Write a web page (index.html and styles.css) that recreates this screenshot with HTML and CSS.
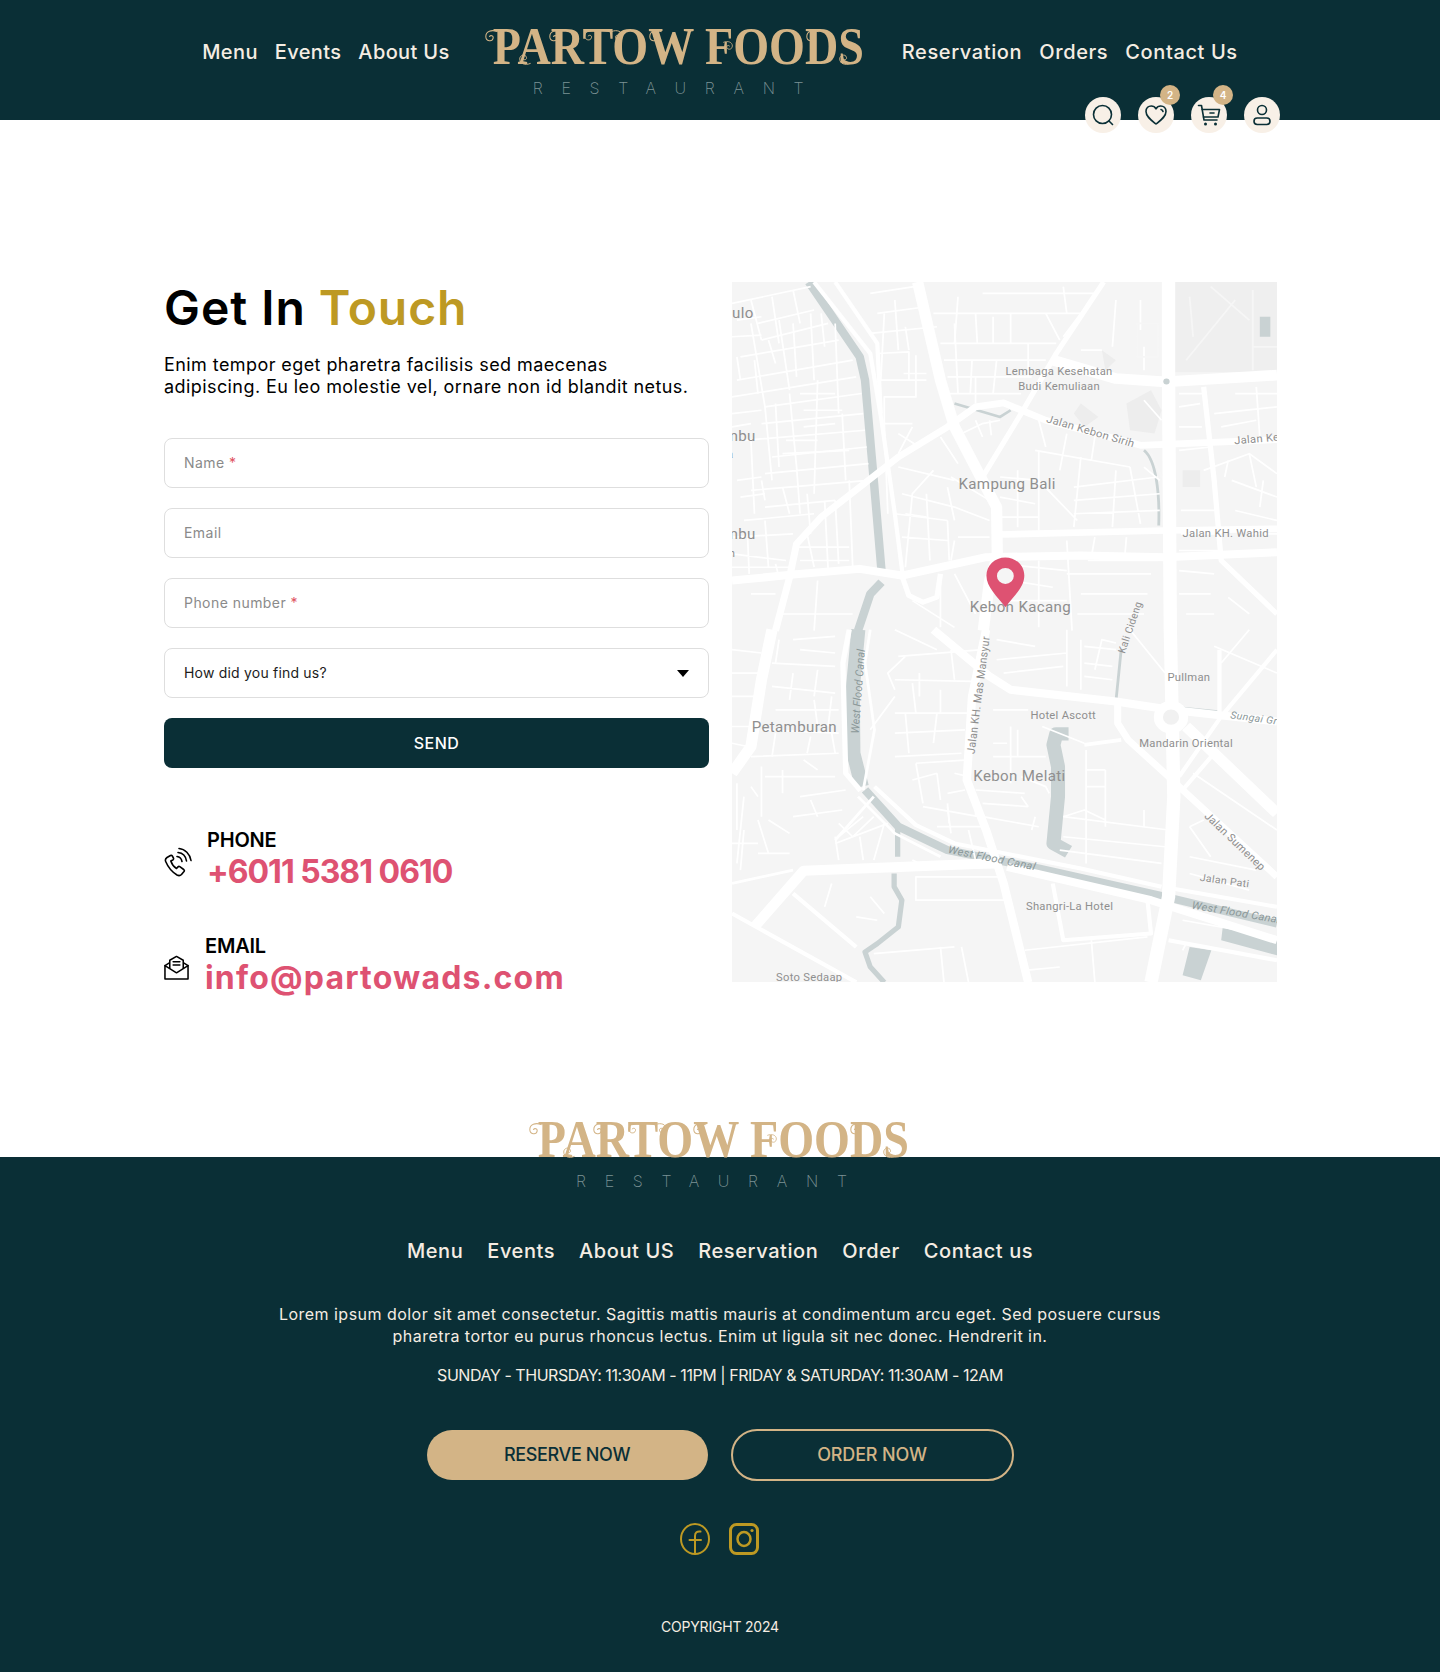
FILE: index.html
```html
<!DOCTYPE html>
<html lang="en">
<head>
<meta charset="utf-8">
<title>Partow Foods Restaurant - Contact</title>
<link rel="stylesheet" href="styles.css">
</head>
<body>
<svg class="defs" width="0" height="0" aria-hidden="true">
  <symbol id="swirl" viewBox="0 0 16 16"><path d="M15 2C8 -1 1 2 1 8c0 6 8 7 9 2c.6-3-3-4-4.500-2" fill="none" stroke="currentColor" stroke-width="1.300" stroke-linecap="round"/></symbol>
  <symbol id="swirl-r" viewBox="0 0 16 16"><path d="M1 2C8 -1 15 2 15 8c0 6-8 7-9 2c-.6-3 3-4 4.500-2" fill="none" stroke="currentColor" stroke-width="1.300" stroke-linecap="round"/></symbol>
  <symbol id="swirl-b" viewBox="0 0 16 16"><path d="M15 14C8 17 1 14 1 8c0-6 8-7 9-2c.6 3-3 4-4.500 2" fill="none" stroke="currentColor" stroke-width="1.300" stroke-linecap="round"/></symbol>
</svg>

<header class="site-header">
  <nav class="nav nav-left">
    <a>Menu</a><a>Events</a><a>About Us</a>
  </nav>
  <div class="logo logo-top">
    <div class="logo-mark">
      <span class="logo-text">PARTOW FOODS</span>
      <svg class="logo-swirls" viewBox="0 0 380 40" aria-hidden="true">
        <use href="#swirl" x="-6" y="4" width="13" height="13"/><use href="#swirl" x="58" y="4" width="13" height="13"/><use href="#swirl" x="93" y="4" width="12" height="12"/><use href="#swirl-r" x="120" y="4" width="12" height="12"/><use href="#swirl" x="158" y="4" width="13" height="13"/><use href="#swirl" x="315" y="4" width="13" height="13"/><use href="#swirl-b" x="28" y="27" width="12" height="12"/><use href="#swirl-b" x="348" y="27" width="12" height="12"/><use href="#swirl-r" x="232" y="15" width="10" height="10"/>
      </svg>
    </div>
    <div class="logo-sub">RESTAURANT</div>
  </div>
  <nav class="nav nav-right">
    <a>Reservation</a><a>Orders</a><a>Contact Us</a>
  </nav>
  <div class="actions">
    <a class="action"><svg viewBox="0 0 24 24"><circle cx="11.500" cy="11.500" r="9"/><path d="M18 18l3.500 3.500"/></svg></a>
    <a class="action"><svg viewBox="0 0 24 24"><path d="M12 21C7 17 2 13.500 2 8.500C2 5 4.500 3 7.200 3C9.200 3 11 4 12 5.800C13 4 14.800 3 16.800 3C19.500 3 22 5 22 8.500C22 13.500 17 17 12 21Z"/><path d="M17 6.500c1 .2 1.800 1 2 2"/></svg><span class="badge">2</span></a>
    <a class="action"><svg viewBox="0 0 24 24"><path d="M1.500 2.500H4.500L7 17H20"/><path d="M5.200 6.500H22.500L21 14H6.500"/><path d="M13 10h4"/><circle cx="8.500" cy="21" r=".7"/><circle cx="18.500" cy="21" r=".7"/></svg><span class="badge">4</span></a>
    <a class="action"><svg viewBox="0 0 24 24"><circle cx="12" cy="7" r="4.500"/><rect x="4" y="15" width="16" height="6.500" rx="3.250"/></svg></a>
  </div>
</header>

<main class="contact">
  <section class="contact-left">
    <h1 class="title">Get In <span class="title-accent">Touch</span></h1>
    <p class="lead">Enim tempor eget pharetra facilisis sed maecenas<br>adipiscing. Eu leo molestie vel, ornare non id blandit netus.</p>
    <form class="form">
      <div class="field">Name <span class="req">*</span></div>
      <div class="field">Email</div>
      <div class="field">Phone number <span class="req">*</span></div>
      <div class="field field-select">How did you find us?<span class="caret"></span></div>
      <div class="send">SEND</div>
    </form>
    <div class="info info-phone">
      <svg class="info-icon icon-phone" viewBox="0 0 28 30"><path d="M6.500 8.500L3 10.500C1.500 11.500 1 13 1.800 14.800C4 20 8 25 13 28C15 29 16.500 28.500 17.500 27.500L20 24.500C20.500 23.800 20.300 23 19.700 22.500L15.800 19.700C15.200 19.300 14.500 19.400 14 19.900L12.500 21.500C10 20 7.800 17 6.800 14L8.800 13C9.500 12.600 9.700 11.900 9.500 11.200L8.300 9C7.900 8.300 7.200 8.100 6.500 8.500Z"/><path d="M13 9.500c2.500.3 4.500 2.300 5 5M14 5.500c4.500.4 7.800 3.800 8.500 8.500M15 1.500c6 .5 11 5.500 12 12"/></svg>
      <div class="info-body">
        <div class="info-label">PHONE</div>
        <div class="info-value value-phone">+6011 5381 0610</div>
      </div>
    </div>
    <div class="info info-email">
      <svg class="info-icon icon-mail" viewBox="0 0 26 26"><path d="M1 11V25H25V11L13 18.500Z"/><path d="M1 11L6 8M25 11L20 8M6 13.500V5.500L13 1.500L20 5.500V13.500"/><path d="M9.500 7H16.500M9.500 10.500H16.500"/></svg>
      <div class="info-body">
        <div class="info-label">EMAIL</div>
        <div class="info-value value-email">info@partowads.com</div>
      </div>
    </div>
  </section>

  <div class="map">
    <svg class="map-svg" viewBox="6 6 1553 2096" preserveAspectRatio="none" aria-label="Map of Kebon Kacang, Jakarta">
      <rect class="m-park" x="1265" y="6" width="294" height="270"/>
      <path class="m-shade" d="M1000 370l50 40-40 30-30-40zM1130 370l70-40 30 60-20 70-70-10zM1290 570h50v50h-50zM1060 210l40 30-30 30z"/>
      <rect class="m-water" x="1510" y="110" width="30" height="60"/>

      <path class="m-water m-w22" d="M225 6L370 230L385 300L410 600L432 870M432 905L400 940L365 1050"/>
      <path class="m-water m-w8" d="M640 370L770 410L800 390M1180 510C1215 540 1225 640 1222 735"/>
      <g transform="translate(0,1047)">
        <path class="m-water m-w40" d="M366 0L350 180L352 370L376 470"/>
        <path class="m-water m-w22" d="M385 480L480 590L620 660L880 715L1220 795L1559 880"/>
        <path class="m-water m-w14" d="M478 590V680M468 730V770L490 810L480 890L420 940L385 965L400 1010L440 1056"/>
        <path class="m-water m-w40" d="M965 312H930L922 345L935 410V500L922 640L965 665"/>
        <path class="m-water m-fill" d="M1405 885L1559 920V975L1400 930ZM1310 950L1372 960L1342 1050L1290 1035Z"/>
        <path class="m-water m-w8" d="M1100 215L1115 60M1290 235L1390 245"/>
      </g>

      <path class="m-thin" d="M6 70L230 20M80 130L240 90M90 180L280 130M30 230L310 180M20 300L350 240M6 350L360 290M100 380L375 340M90 430L380 400M40 480L385 450M120 530L390 500M100 580L395 550M60 630L395 600M100 680L300 660M40 720L240 700M10 770L180 760M6 820L160 840M60 130L100 380M140 120L170 330M230 100L240 300M300 130L310 400M170 340L190 560M250 300L240 640M320 400L330 600M100 380L120 600M60 480L70 700M340 600L350 860M270 660L280 870M190 560L200 700M130 850L140 890M50 760L55 880M190 800H340M200 840H340"/>
      <path class="m-thin" d="M60 60L90 180M120 50L140 190M180 30L200 130M20 120L90 110M6 170L90 165M20 230L30 300M70 240L80 340M110 180L130 250M180 130L190 290M260 100L270 200M6 400L90 390M6 440L60 430M130 370L140 560M200 340H300M210 390H320M210 440L300 430M160 480H250M150 520L340 510M150 620L170 700M220 640L230 760M90 600L100 660M20 600L90 590M30 650L100 640M300 660L310 850M220 760L240 860M100 720L110 860M6 860H170"/>
      <path class="m-thin" d="M400 40L525 20M420 100L560 80M400 160L590 140M420 220L510 215V300H430M495 280H560M495 300H560M530 225V350H440V430H510M440 430L520 430M580 100H1000M600 190H930M610 240H900M620 290H860M625 340H830M750 110V190M900 100L940 180M1000 100L950 170M720 40H1040M650 50L640 190M480 560L640 600M580 570L520 640L500 860M470 700L620 720M490 640L640 680M490 770L620 780M620 720L625 840M640 680L740 720M630 590L740 660M600 470L650 550"/>
      <path class="m-thin" d="M440 100L430 300M470 60L480 210M560 60L565 130M500 140L510 210M640 130L650 340M700 100L705 190M800 100V190M850 190V290M760 240L750 340M690 240L685 340M700 290V370M950 20L960 100M1100 60L1090 200M1170 60V150M1180 200V270M1000 210H1060M640 470L720 430L770 420M700 420L720 470M740 420L745 465M440 430L450 700M520 440L480 520M480 460L540 500M620 620L640 720M560 640L570 840M500 700L560 710M650 770H740M640 780L630 840M1180 360L1230 420M1380 400L1559 380M1400 440L1500 420M1440 340H1559M1280 380L1340 370M1420 540L1410 590M1480 520L1500 620M1520 600L1510 680"/>
      <path class="m-thin" d="M870 510L1140 560M1000 530L980 740M1100 570L1090 740M880 510V750M770 590L880 600M770 650L870 670M770 710H880M880 600L990 720M980 620L1220 590M980 660L1225 640M980 700L1225 690M960 460L940 570M1040 470L1030 540M880 420L900 500M1180 560L1225 600M820 570V740M1140 560L1170 730M1350 570L1480 520L1559 580M1430 600L1559 650M1440 690L1559 720M1480 760H1559M1510 470L1500 320M1280 340H1350M1280 440H1345M1280 510L1370 500M1285 690H1390M1285 760H1390M1280 810H1400"/>
      <path class="m-thin" d="M990 880L1200 880M770 850L960 870M960 780L975 1050M1020 840H1220M960 880L1140 880M880 840V1040M800 900L920 920M780 960L960 960M1000 940L1190 940M990 1000H1180M1040 770L1030 830M1130 770L1125 830M1280 870L1380 880M1280 940H1370M1300 1000H1380M1420 950L1480 1000M600 880V1040M520 960L640 1040M640 880L700 1000M250 900L240 1050M350 1000H140M60 940H130"/>
      <path class="m-thin m-faint" d="M1300 240L1440 60M1310 50L1320 170M1370 20L1480 120M1490 30V270M1490 200H1559M1160 130H1220V230H1160ZM1200 520L1235 600"/>

      <path class="m-road m-w12" d="M240 6L400 220L432 420L470 700L492 880"/>
      <path class="m-road m-w30" d="M535 6L600 300L640 440L712 585L760 680L762 830L740 900L722 1050"/>
      <path class="m-road m-w22" d="M6 900L180 882L370 865L490 885L730 830L1000 825L1240 830L1559 815"/>
      <path class="m-road m-w18" d="M130 1050L170 890L190 790L260 710L480 530L620 440L700 380L780 368L900 420L1170 495L1559 478"/>
      <path class="m-road m-w36" d="M1250 6V300L1255 1050"/>
      <path class="m-road m-w30" d="M920 240L1100 295L1240 305L1559 285"/>
      <path class="m-road m-w14" d="M720 590L830 400L930 220L1065 6"/>
      <path class="m-road m-w18" d="M770 762L1240 750L1559 745"/>
      <path class="m-road m-w14" d="M1350 320L1380 600L1400 840L1559 1000"/>
      <path class="m-road m-w14" d="M490 885L510 945L550 965L590 950L600 880"/>
      <path class="m-road m-w12" d="M300 6L420 190L430 400"/>
      <circle class="m-dot" cx="1244" cy="304" r="9"/>

      <g transform="translate(0,1047)">
        <path class="m-road m-w22" d="M730 0L690 200L675 450L730 600L780 760L850 1056"/>
        <path class="m-road m-w22" d="M580 0L740 140L800 180L1100 215L1255 240L1559 275"/>
        <path class="m-road m-w36" d="M1255 0L1265 500L1250 800L1200 1056"/>
        <path class="m-road m-w18" d="M1105 220V280L1135 330L1250 440L1290 480L1559 740"/>
        <path class="m-road m-w30" d="M1300 290L1559 550"/>
        <path class="m-road m-w12" d="M1280 440L1400 260L1559 60M1395 60V270M1115 330L1010 345M1380 370L1290 480"/>
        <path class="m-road m-w30" d="M6 430L60 350L90 150L120 0"/>
        <path class="m-road m-w14" d="M340 0L322 100L330 430L372 482"/>
        <path class="m-road m-w12" d="M412 470L530 585L640 640L1000 715L1230 770"/>
        <path class="m-road m-w8" d="M365 500L470 610L600 680M400 0L385 100L412 300L380 480"/>
        <path class="m-road m-w28" d="M70 890L210 722L700 702L760 700"/>
        <path class="m-road m-w22" d="M790 710L1200 810L1559 930"/>
        <path class="m-road m-w12" d="M6 850L360 1056M180 790L360 950M1260 775L1559 830M1250 930L1559 990M920 760L950 930L1200 910L1190 810"/>
        <path class="m-road m-w8" d="M6 760L180 720M300 630L410 500"/>
        <circle class="m-round" cx="1257" cy="262" r="36"/>
        <path class="m-thin" d="M470 0L590 60M480 80L720 60M470 150L690 155M540 130V200M470 250H680M470 310L670 300M590 250L580 340M470 380L660 370M530 400L680 390M530 400L550 520M620 490L670 480M550 530L710 560M620 520L625 580M700 480L840 490M720 520L850 530M720 560L880 590M760 30L870 50M760 90L960 70M780 130L950 110M750 240H850M800 290V460M750 380H900M890 290L1010 340M1000 30V180M960 0V170M1040 120L1060 30L1100 40M1010 50L1100 60M1010 100L1090 110M1010 140L1090 150M1015 360V700M1015 420H1070M1015 470H1070M1070 420V590M950 560L1250 600M950 620L1240 650M950 560L1010 540L1070 570M940 660L1230 700M1240 130L1140 0M1400 100L1480 0M1380 50L1559 130M1320 430L1559 600M1310 590L1370 680M1310 680L1500 720M1310 730L1480 780M1350 570L1310 590"/>
        <path class="m-thin" d="M120 100L300 110M120 170L300 190M180 130L170 210M240 210L250 290M60 380L310 370M100 440H300M90 410L90 560M150 420V490M200 500L330 480M210 390L250 420M180 560L320 540M80 570L110 670M80 670H170M110 570L170 610M300 620L310 690M310 580L350 620L410 560M310 620L380 560M300 640L450 580M440 580L410 690M370 620L380 690M540 700L520 690M530 740H780V810H530ZM1180 540V590M90 130L70 290M400 300L470 200M290 760L270 830M400 800L440 850M360 860L420 870M410 970L640 950M600 950L610 1056M660 950L680 1056M840 960L1190 920M840 1020L940 1010M1030 930L1040 1056M1290 870L1559 920M1300 940L1290 960M1240 700L1230 880"/>
        <path class="m-thin" d="M6 60L90 70M6 130H90M6 200H70M6 290H60M6 340L50 350M140 30L130 100M180 30L300 20M200 60L300 70M130 240L310 240M250 120L240 200M290 200L280 290M90 300L310 310M130 310L120 380M230 320L220 370M290 310L300 370M20 460V600M40 500L20 700M60 470L80 500M230 510L250 560M6 640H80M40 600L30 720M470 180L450 130L500 80M520 160L530 250M630 60L640 150M600 180V250M500 250L510 370M520 450L590 430M590 430L600 510M640 430L680 440M590 590H720M620 530L630 610M680 600L700 690M820 300V380M750 340H790M830 440L900 470L910 490M830 500L850 530M870 560L860 600M700 500V560"/>
      </g>

      <g class="m-labels">
        <text x="6" y="113" class="m-lg">ulo</text>
        <text x="-15" y="482" class="m-lg">mbu</text>
        <text x="-8" y="534" class="m-md">a</text>
        <text x="-15" y="777" class="m-lg">mbu</text>
        <text x="-12" y="830" class="m-md">in</text>
        <text x="938" y="285" class="m-md m-c">Lembaga Kesehatan</text>
        <text x="938" y="328" class="m-md m-c">Budi Kemuliaan</text>
        <text class="m-md" transform="translate(900,425) rotate(17)">Jalan Kebon Sirih</text>
        <text class="m-md" transform="translate(1438,492) rotate(-5)">Jalan Kebon</text>
        <text x="790" y="625" class="m-lg m-c">Kampung Bali</text>
        <text x="1290" y="770" class="m-md">Jalan KH. Wahid</text>
        <text x="828" y="995" class="m-lg m-c">Kebon Kacang</text>
        <text class="m-sm" transform="translate(1125,1120) rotate(-72)">Kali Cideng</text>
        <text class="m-md" transform="translate(697,1420) rotate(-83)">Jalan KH. Mas Mansyur</text>
        <g transform="translate(0,1047)">
          <text class="m-md m-it" transform="translate(367,312) rotate(-86)">West Flood Canal</text>
          <text x="1308" y="155" class="m-md m-c">Pullman</text>
          <text x="950" y="268" class="m-md m-c">Hotel Ascott</text>
          <text class="m-sm m-it" transform="translate(1425,265) rotate(8)">Sungai Grogol</text>
          <text x="1300" y="350" class="m-md m-c">Mandarin Oriental</text>
          <text x="62" y="307" class="m-lg">Petamburan</text>
          <text x="825" y="453" class="m-lg m-c">Kebon Melati</text>
          <text class="m-md m-it" transform="translate(620,668) rotate(12)">West Flood Canal</text>
          <text class="m-md" transform="translate(1350,560) rotate(45)">Jalan Sumenep</text>
          <text class="m-sm" transform="translate(1338,752) rotate(8)">Jalan Pati</text>
          <text x="968" y="840" class="m-md m-c">Shangri-La Hotel</text>
          <text class="m-md m-it" transform="translate(1315,835) rotate(10)">West Flood Canal</text>
          <text x="226" y="1052" class="m-md m-c">Soto Sedaap</text>
        </g>
      </g>
      <path class="m-pin" fill-rule="evenodd" d="M785 980C760 945 731 920 731 885C731 855 755 831 785 831C815 831 839 855 839 885C839 920 810 945 785 980ZM785 862A24 24 0 1 0 785 910A24 24 0 1 0 785 862Z"/>
    </svg>
  </div>
</main>

<footer class="site-footer">
  <div class="logo logo-bottom">
    <div class="logo-mark">
      <span class="logo-text">PARTOW FOODS</span>
      <svg class="logo-swirls" viewBox="0 0 380 40" aria-hidden="true">
        <use href="#swirl" x="-6" y="4" width="13" height="13"/><use href="#swirl" x="58" y="4" width="13" height="13"/><use href="#swirl" x="93" y="4" width="12" height="12"/><use href="#swirl-r" x="120" y="4" width="12" height="12"/><use href="#swirl" x="158" y="4" width="13" height="13"/><use href="#swirl" x="315" y="4" width="13" height="13"/><use href="#swirl-b" x="28" y="27" width="12" height="12"/><use href="#swirl-b" x="348" y="27" width="12" height="12"/><use href="#swirl-r" x="232" y="15" width="10" height="10"/>
      </svg>
    </div>
    <div class="logo-sub">RESTAURANT</div>
  </div>
  <nav class="nav footer-nav">
    <a>Menu</a><a>Events</a><a>About US</a><a>Reservation</a><a>Order</a><a>Contact us</a>
  </nav>
  <p class="footer-text">Lorem ipsum dolor sit amet consectetur. Sagittis mattis mauris at condimentum arcu eget. Sed posuere cursus pharetra tortor eu purus rhoncus lectus. Enim ut ligula sit nec donec. Hendrerit in.</p>
  <p class="footer-hours">SUNDAY - THURSDAY: 11:30AM - 11PM | FRIDAY &amp; SATURDAY: 11:30AM - 12AM</p>
  <div class="cta">
    <a class="btn btn-solid">RESERVE NOW</a>
    <a class="btn btn-outline">ORDER NOW</a>
  </div>
  <div class="social">
    <svg class="social-icon" viewBox="0 0 30 32"><ellipse cx="15" cy="16" rx="14" ry="15"/><path d="M15 31V13C15 9.500 17 8 20.500 8.500M9.500 17H21"/></svg>
    <svg class="social-icon social-ig" viewBox="0 0 30 32"><rect x="1.500" y="1.500" width="27" height="29" rx="6"/><ellipse cx="15" cy="16" rx="6.500" ry="7"/><circle class="social-dot" cx="23" cy="7.500" r="1.600"/></svg>
  </div>
  <div class="copyright">COPYRIGHT 2024</div>
</footer>
</body>
</html>
```
FILE: styles.css
```css
* { box-sizing: border-box; }
html, body { margin: 0; padding: 0; }
body {
  font-family: "Inter", "Liberation Sans", sans-serif;
  background: #fff;
  color: #000;
  width: 1440px;
}
.defs { position: absolute; }
a { color: inherit; text-decoration: none; }

/* header */
.site-header {
  position: relative;
  height: 120px;
  background: #0a2f36;
  display: flex;
  justify-content: center;
  align-items: flex-start;
  padding-top: 40px;
  gap: 33px;
}
.nav {
  display: flex;
  gap: 17px;
  font-size: 20px;
  font-weight: 500;
  line-height: 24px;
  color: #f5ede3;
}
.nav-left { letter-spacing: .37px; }
.nav-right { letter-spacing: .62px; }
.logo { color: #d3b486; }
.logo-top { margin-top: -18px; width: 386px; }
.logo-mark {
  position: relative;
  width: 386px;
  height: 48px;
  padding-left: 6px;
  display: flex;
  justify-content: center;
}
.logo-text {
  flex: none;
  font-family: "Liberation Serif", serif;
  font-weight: 700;
  font-size: 53px;
  line-height: 48px;
  white-space: nowrap;
  transform: scaleX(.87);
  color: #d3b486;
}
.logo-swirls {
  position: absolute;
  left: 8px;
  top: 4px;
  width: 380px;
  height: 40px;
  color: #d3b486;
  overflow: visible;
}
.logo-sub {
  margin-top: 8px;
  margin-left: 50px;
  font-size: 16px;
  line-height: 20px;
  font-weight: 200;
  letter-spacing: 18.7px;
  color: #7d9395;
  white-space: nowrap;
}
.actions {
  position: absolute;
  left: 1085px;
  top: 97px;
  display: flex;
  gap: 17px;
}
.action {
  position: relative;
  width: 36px;
  height: 36px;
  border-radius: 50%;
  background: #f8f0e7;
  display: flex;
  align-items: center;
  justify-content: center;
}
.action svg {
  width: 24px;
  height: 24px;
  fill: none;
  stroke: #0a2f36;
  stroke-width: 1.600;
  stroke-linecap: round;
  stroke-linejoin: round;
}
.badge {
  position: absolute;
  left: 22px;
  top: -12px;
  width: 20px;
  height: 20px;
  border-radius: 50%;
  background: #d3b486;
  color: #fff;
  font-size: 10px;
  font-weight: 600;
  line-height: 20px;
  text-align: center;
}

/* contact */
.contact {
  display: grid;
  grid-template-columns: 545px 545px;
  gap: 23px;
  justify-content: center;
  padding: 162px 0 175px;
  height: 1037px;
  margin-left: 1px;
}
.title {
  margin: 0;
  font-size: 48px;
  line-height: 52px;
  font-weight: 600;
  letter-spacing: .95px;
}
.title-accent { color: #bd9923; }
.lead {
  margin: 20px 0 0;
  font-size: 18px;
  line-height: 22px;
  letter-spacing: .42px;
  color: #000;
}
.form {
  margin-top: 40px;
  display: flex;
  flex-direction: column;
  gap: 20px;
}
.field {
  position: relative;
  height: 50px;
  padding: 0 19px;
  border: 1px solid #dedede;
  border-radius: 8px;
  font-size: 14px;
  line-height: 48px;
  letter-spacing: .45px;
  color: #8a8a8a;
  background: #fff;
}
.req { color: #e0525f; }
.field-select { color: #1c1c1c; letter-spacing: .2px; }
.caret {
  position: absolute;
  right: 19px;
  top: 21px;
  border-left: 6px solid transparent;
  border-right: 6px solid transparent;
  border-top: 7px solid #000;
}
.send {
  height: 50px;
  border-radius: 8px;
  background: #0a2f36;
  color: #fff;
  font-size: 16px;
  font-weight: 500;
  line-height: 50px;
  letter-spacing: .5px;
  text-align: center;
}
.info { display: flex; align-items: center; }
.info-phone { margin-top: 60px; gap: 15px; }
.info-email { margin-top: 42px; gap: 16px; }
.info-icon {
  fill: none;
  stroke: #000;
  stroke-width: 1.600;
  stroke-linejoin: round;
  stroke-linecap: round;
  flex: none;
}
.icon-phone { width: 28px; height: 30px; margin-top: 4px; }
.icon-mail { width: 25px; height: 25px; margin-top: 2px; }
.info-label {
  font-size: 20px;
  line-height: 24px;
  font-weight: 600;
  letter-spacing: -.2px;
}
.info-value {
  font-size: 32px;
  line-height: 40px;
  font-weight: 700;
  color: #de5272;
}
.value-phone { letter-spacing: -1px; }
.value-email { letter-spacing: 1.2px; }

/* map */
.map {
  height: 700px;
  background: #f5f5f5;
  overflow: hidden;
}
.map-svg { display: block; width: 545px; height: 700px; }
.m-road, .m-thin, .m-water { fill: none; stroke-linejoin: round; }
.m-road { stroke: #fff; }
.m-water { stroke: #c9d2d3; }
.m-water.m-fill { fill: #c9d2d3; stroke: none; }
rect.m-water { fill: #c9d2d3; stroke: none; }
.m-thin { stroke: #fff; stroke-width: 5; }
.m-faint { stroke: #f6f6f6; }
.m-w8 { stroke-width: 8; }
.m-w12 { stroke-width: 12; }
.m-w14 { stroke-width: 15; }
.m-w18 { stroke-width: 20; }
.m-w22 { stroke-width: 24; }
.m-w28 { stroke-width: 30; }
.m-w30 { stroke-width: 32; }
.m-w36 { stroke-width: 38; }
.m-w40 { stroke-width: 40; }
.m-park { fill: #efefef; }
.m-shade { fill: #ededed; }
.m-dot { fill: #c9d2d3; }
.m-round { fill: #f1f1f1; stroke: #fff; stroke-width: 26; }
.m-pin { fill: #de5272; }
.m-labels text {
  font-family: "Roboto", "Liberation Sans", sans-serif;
  fill: #8f8f8f;
}
.m-lg { font-size: 43px; letter-spacing: 1px; }
.m-md { font-size: 32px; letter-spacing: .8px; }
.m-sm { font-size: 30px; letter-spacing: 1px; }
.m-c { text-anchor: middle; }
.m-labels .m-it { font-style: italic; fill: #8b9899; }

/* footer */
.site-footer {
  height: 515px;
  background: #0a2f36;
  color: #f5ede3;
  display: flex;
  flex-direction: column;
  align-items: center;
}
.logo-bottom { margin-top: -42px; width: 386px; }
.logo-bottom .logo-sub { margin-left: 49px; }
.footer-nav { margin-top: 48px; gap: 24px; letter-spacing: .58px; }
.footer-text {
  margin: 40px 0 0;
  width: 910px;
  font-size: 16px;
  line-height: 22px;
  text-align: center;
  letter-spacing: .47px;
}
.footer-hours {
  margin: 17px 0 0;
  font-size: 16px;
  line-height: 22px;
  letter-spacing: -.45px;
}
.cta {
  margin-top: 43px;
  display: flex;
  align-items: center;
  gap: 23px;
}
.btn {
  width: 281px;
  height: 50px;
  border-radius: 25px;
  font-size: 18px;
  font-weight: 500;
  line-height: 50px;
  text-align: center;
}
.btn-solid { background: #d3b486; color: #0a2f36; letter-spacing: -.35px; }
.btn-outline {
  width: 283px;
  height: 52px;
  border-radius: 26px;
  border: 2px solid #d3b486;
  line-height: 48px;
  letter-spacing: -.15px;
  color: #d3b486;
}
.social {
  margin-top: 42px;
  margin-right: 2px;
  display: flex;
  gap: 19px;
}
.social-icon {
  width: 30px;
  height: 32px;
  fill: none;
  stroke: #bd9923;
  stroke-width: 2;
  stroke-linecap: round;
}
.social-ig { stroke-width: 3; }
.social-ig ellipse { stroke-width: 2.500; }
.social-dot { fill: #bd9923; stroke: none; }
.copyright {
  margin-top: 63px;
  font-size: 14px;
  line-height: 18px;
  letter-spacing: -.2px;
}
```
